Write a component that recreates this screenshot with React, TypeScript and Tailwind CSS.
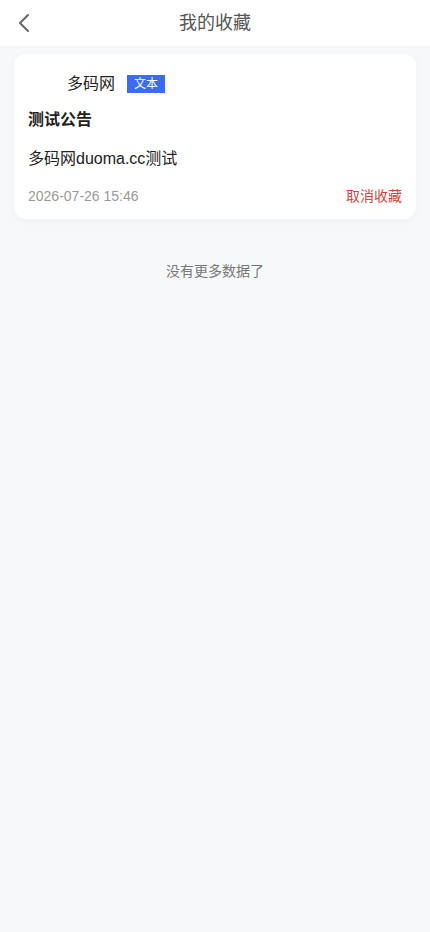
import React from "react";

interface Favorite {
  author: string;
  tag: string;
  title: string;
  content: string;
  time: string;
}

const favorites: Favorite[] = [
  {
    author: "多码网",
    tag: "文本",
    title: "测试公告",
    content: "多码网duoma.cc测试",
    time: "2026-07-26 15:46",
  },
];

const font = { fontFamily: '"Liberation Sans", "Noto Sans CJK SC", sans-serif' };

const App = () => (
  <div className="min-h-[932px] w-full bg-[#f7f8fa]" style={font}>
    {/* Header */}
    <div className="relative flex h-[46px] items-center justify-center bg-white">
      <button className="absolute left-[12px] top-[11px] flex h-6 w-6 items-center justify-center">
        <svg width="14" height="20" viewBox="0 0 14 20" fill="none">
          <path d="M11 2 L3 10 L11 18" stroke="#666" strokeWidth="2" strokeLinecap="round" strokeLinejoin="round" />
        </svg>
      </button>
      <h1 className="text-[18px] text-[#555]">我的收藏</h1>
    </div>

    {/* List */}
    <div className="px-[14px] pt-[8px]">
      {favorites.map((item) => (
        <div key={item.title} className="rounded-[12px] bg-white px-[14px] pt-[18px] pb-[13px] shadow-[0_2px_8px_rgba(0,0,0,0.03)]">
          <div className="flex items-center">
            <div className="h-[24px] w-[24px] shrink-0" />
            <span className="ml-[15px] text-[16px] text-[#222]">{item.author}</span>
            <span className="ml-[12px] bg-[#3d6af5] px-[7px] text-[12px] leading-[18px] text-white">{item.tag}</span>
          </div>
          <div className="mt-[12px] text-[16px] font-bold leading-[24px] text-[#222]">{item.title}</div>
          <div className="mt-[15px] text-[16px] leading-[24px] text-[#222]">{item.content}</div>
          <div className="mt-[15px] flex items-center justify-between text-[14px] leading-[20px]">
            <span className="text-[#999]">{item.time}</span>
            <span className="text-[#d0463f]">取消收藏</span>
          </div>
        </div>
      ))}
      <div className="mt-[42px] text-center text-[14px] leading-[20px] text-[#777]">没有更多数据了</div>
    </div>
  </div>
);

export default App;
